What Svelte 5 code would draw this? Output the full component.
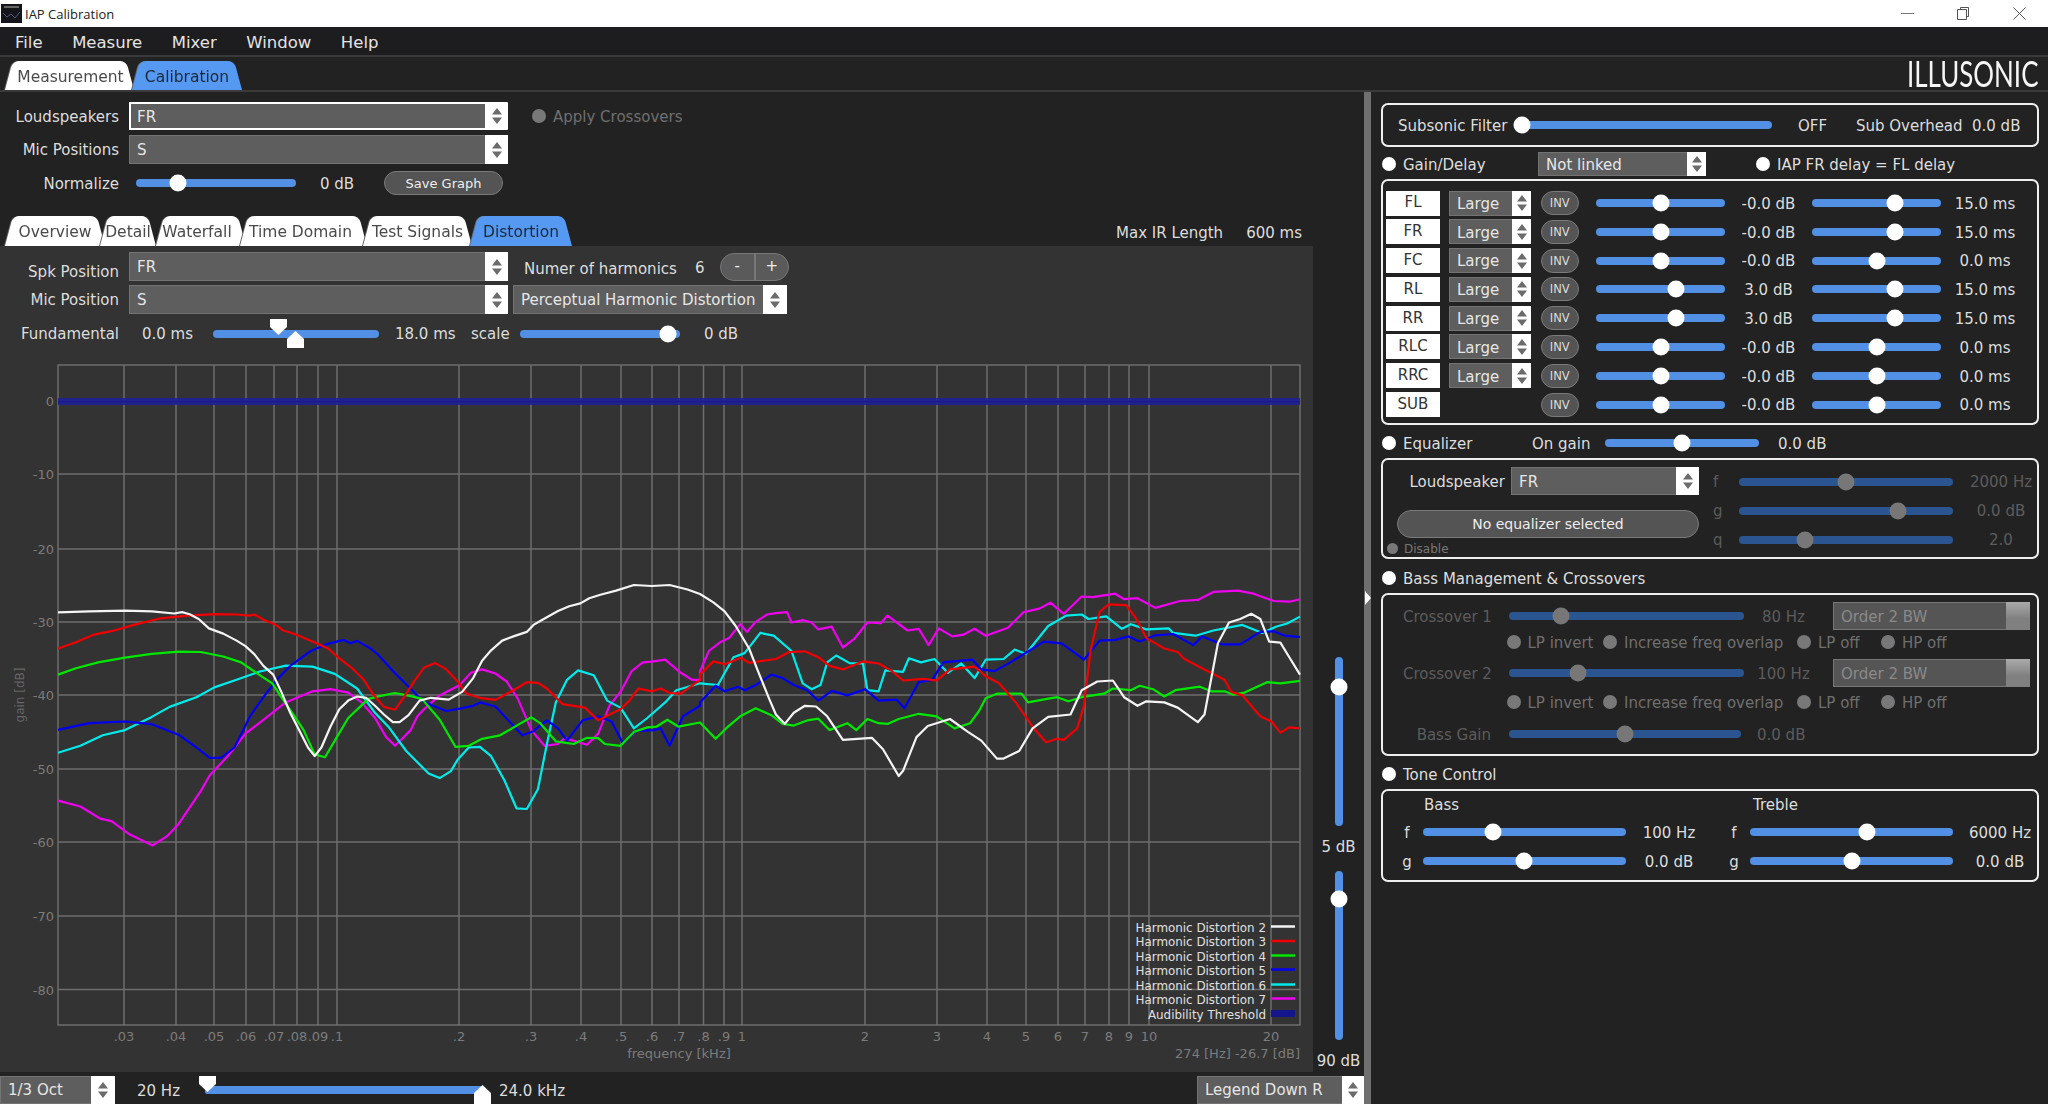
<script>
  const curves = {
    magenta: ['#f000f0', '130,693 180,710 225,745 250,752 290,790 342,822 375,795 400,760 450,665 470,620 510,565 550,500 600,450 640,410 700,378 740,372 780,382 810,410 840,455 865,510 885,535 920,490 935,450 950,430 985,390 1030,360 1055,325 1080,315 1110,327 1135,350 1160,400 1190,490 1220,535 1250,530 1265,513 1315,532 1340,500 1365,420 1390,380 1415,320 1440,295 1460,293 1490,287 1525,325 1550,345 1568,345',
      '0,320 20,262 45,237 65,225 90,185 105,207 125,178 150,157 170,153 195,150 205,180 230,173 250,180 265,200 295,192 320,252 345,228 375,180 405,182 420,160 465,203 490,198 512,245 535,197 565,220 590,215 615,198 640,218 690,195 725,150 760,140 785,123 815,155 855,105 880,107 930,97 950,113 980,110 1020,138 1075,118 1115,115 1150,92 1205,88 1240,97 1285,118 1320,120 1344,113'],
    cyan: ['#00ecec', '130,555 180,535 230,505 280,490 340,452 380,423 440,395 480,367 530,345 580,322 640,304 700,307 750,328 800,370 840,440 870,480 910,550 960,615 985,628 1010,608 1025,575 1050,540 1075,538 1100,565 1130,635 1157,715 1180,717 1205,660 1225,530 1245,410 1270,345 1295,318 1330,332 1360,405 1390,425 1420,485 1450,455 1490,410 1515,375 1568,355',
      '0,355 40,360 75,280 100,268 135,210 165,218 205,262 230,355 250,372 270,360 285,295 305,275 335,297 365,298 375,375 400,378 415,318 455,322 468,283 495,295 525,285 555,325 585,298 615,340 640,287 680,285 705,258 730,270 780,190 820,160 855,157 870,170 910,162 945,198 965,185 1000,200 1050,197 1060,210 1110,218 1150,203 1215,187 1260,210 1290,192 1315,183 1344,163'],
    blue: ['#0000f0', '130,489 200,470 280,465 340,473 400,503 440,540 470,570 495,570 525,540 545,490 560,450 590,395 620,345 650,305 695,263 730,243 770,230 785,240 800,233 830,255 845,270 880,320 910,358 945,405 970,420 1000,435 1030,428 1060,420 1075,410 1110,422 1130,450 1170,505 1195,493 1225,462 1250,485 1270,520 1305,462 1340,450 1370,465 1395,528 1425,492 1465,490 1480,485 1500,535 1530,450 1568,420',
      '0,410 35,362 55,378 85,365 100,375 125,360 160,330 185,340 210,360 240,375 265,405 295,377 330,390 370,372 400,405 440,402 458,427 490,352 520,345 545,295 610,287 630,315 660,320 695,295 770,235 810,240 860,287 895,232 930,230 960,220 985,235 1020,217 1060,213 1105,245 1125,220 1170,243 1210,243 1255,207 1285,205 1310,218 1344,222'],
    green: ['#00e800', '130,330 170,312 220,295 280,281 340,270 400,264 450,265 500,278 540,295 580,330 610,355 630,395 660,450 680,490 705,560 728,568 750,520 780,455 825,400 850,392 885,383 920,392 945,400 985,460 1020,538 1050,535 1080,515 1120,505 1160,475 1190,453 1210,470 1245,522 1285,530 1315,512 1340,513 1355,530 1390,535 1420,495 1450,482 1470,480 1495,460 1520,480 1568,468',
      '0,468 35,515 60,483 90,450 125,427 160,447 185,472 210,477 240,462 265,457 290,490 330,470 350,490 375,458 400,470 420,472 445,458 490,443 530,450 570,485 605,470 625,435 640,398 665,385 720,385 735,410 765,403 800,395 825,407 855,395 905,385 925,370 965,375 985,362 1015,372 1040,393 1065,375 1120,365 1145,378 1175,378 1195,388 1220,382 1270,352 1300,355 1344,348'],
    red: ['#f00000', '130,255 170,237 210,215 250,205 300,187 360,168 420,160 480,156 530,157 560,160 570,157 590,172 615,185 635,203 660,213 700,235 735,255 760,283 790,313 815,345 835,385 860,423 885,431 905,395 930,345 950,310 975,297 1000,315 1025,350 1045,385 1075,397 1110,403 1150,375 1180,352 1205,354 1225,370 1260,415 1285,420 1310,425 1340,462 1365,445 1390,430 1410,405 1430,370 1460,378 1480,370 1500,383 1525,385 1568,345',
      '0,330 30,292 55,300 90,282 110,296 170,285 200,265 235,263 265,280 290,305 320,315 365,292 400,298 430,320 455,347 500,342 530,347 560,315 615,307 640,335 670,355 710,415 745,480 775,525 800,515 815,518 845,485 860,420 875,260 895,150 915,128 955,130 975,165 1000,225 1040,255 1070,265 1085,285 1130,315 1175,345 1190,380 1215,390 1255,450 1280,465 1300,497 1320,482 1344,485'],
    white: ['#f4f4f4', '130,151 200,148 280,146 340,148 390,154 408,150 425,156 445,170 468,197 500,212 530,232 550,248 570,272 590,305 612,330 630,380 650,440 670,490 690,540 705,565 720,540 740,480 760,430 780,405 800,393 820,397 840,420 860,445 880,467 895,467 915,447 940,405 965,397 1005,402 1035,380 1060,340 1080,290 1100,260 1125,232 1150,220 1180,207 1195,187 1215,172 1250,147 1275,133 1300,125 1320,110 1345,100 1380,88 1420,72 1460,75 1500,72 1540,85 1568,98',
      '0,98 30,122 55,148 80,190 110,255 130,320 155,400 170,445 190,472 210,440 235,420 260,422 285,450 320,518 385,512 410,545 445,622 455,607 485,510 510,478 560,458 600,495 630,520 665,572 680,572 715,550 745,485 780,452 830,445 855,375 890,350 925,347 950,395 980,420 1000,407 1040,410 1070,425 1115,467 1130,445 1160,240 1185,180 1210,170 1235,155 1255,170 1275,235 1300,238 1320,280 1344,330']
  };
  const toPoints = (a, b) => {
    const conv = (s, ox) => s.split(' ').map((p) => {
      const [u, v] = p.split(',').map(Number);
      return `${(ox + u / 2.24).toFixed(1)},${(560 + v / 2.88).toFixed(1)}`;
    }).join(' ');
    return conv(a, 0) + ' ' + conv(b, 700);
  };
  const lines = Object.values(curves).map(([c, a, b]) => ({ c, pts: toPoints(a, b) }));
  const gridV = [[124,'.03'],[176,'.04'],[214,'.05'],[246,'.06'],[274,'.07'],[297,'.08'],[318,'.09'],[337,'.1'],[459,'.2'],[531,'.3'],[581,'.4'],[621,'.5'],[652,'.6'],[679,'.7'],[703.5,'.8'],[724,'.9'],[742,'1'],[865,'2'],[937,'3'],[987,'4'],[1026,'5'],[1058,'6'],[1085,'7'],[1109,'8'],[1129,'9'],[1149,'10'],[1271,'20']];
  const gridH = [[401,'0'],[474,'-10'],[549,'-20'],[622,'-30'],[695,'-40'],[769,'-50'],[842,'-60'],[916,'-70'],[989.5,'-80']];
  const legend = [['Harmonic Distortion 2','#f4f4f4',927],['Harmonic Distortion 3','#f00000',941.5],['Harmonic Distortion 4','#00e800',956],['Harmonic Distortion 5','#0000f0',970],['Harmonic Distortion 6','#00ecec',985],['Harmonic Distortion 7','#f000f0',999]];
  const outerTabs = [['Measurement',129,0,false,1],['Calibration',110,-2,true,0]];
  const innerTabs = [['Overview',100,0,false,0],['Detail',56,-5,false,0],['Waterfall',90,0,false,-4],['Time Domain',127,-6,false,-3],['Test Signals',109,-4,false,0],['Distortion',102,-2,true,0]];
  const channels = [
    ['FL',true,64.5,'-0.0 dB',83,'15.0 ms'],['FR',true,64.5,'-0.0 dB',83,'15.0 ms'],['FC',true,64.5,'-0.0 dB',65,'0.0 ms'],
    ['RL',true,79.5,'3.0 dB',83,'15.0 ms'],['RR',true,79.5,'3.0 dB',83,'15.0 ms'],['RLC',true,64.5,'-0.0 dB',65,'0.0 ms'],
    ['RRC',true,64.5,'-0.0 dB',65,'0.0 ms'],['SUB',false,64.5,'-0.0 dB',65,'0.0 ms']
  ];
  const eqs = [['f',107,'2000 Hz'],['g',159,'0.0 dB'],['q',66,'2.0']];
  const radios = ['LP invert','Increase freq overlap','LP off','HP off'];
</script>

{#snippet slider(w, c, off = false)}
  <div class="slider" class:off style="width:{w}px">
    {#if c !== null}<span class="thumb" style="left:{c}px"></span>{/if}
  </div>
{/snippet}
{#snippet vslider(c)}
  <div class="vslider"><span class="thumb" style="top:{c}px"></span></div>
{/snippet}
{#snippet combo(text, w, ab = 23, extra = '')}
  <div class="combo {extra}" style="width:{w}px">
    <span class="ctext">{text}</span>
    <span class="arrows" style="width:{ab}px">
      {#if extra !== 'grayed'}
        <svg width="10" height="16" viewBox="0 0 10 16"><path d="M5 0 L10 6.5 H0 Z M5 16 L0 9.5 H10 Z" fill="#6b6b6b"/></svg>
      {/if}
    </span>
  </div>
{/snippet}
{#snippet radio(text, off = false)}
  <div class="radio" class:off><i></i><span>{text}</span></div>
{/snippet}
{#snippet tabs(list)}
  {#each list as [t, w, m, active, s]}
    <div class="tab" class:active style="width:{w}px;margin-left:{m}px"><span style="left:{s}px">{t}</span></div>
  {/each}
{/snippet}

<div class="app">
  <header class="titlebar">
    <svg class="appicon" width="21" height="19" viewBox="0 0 21 19">
      <rect width="21" height="19" fill="#14151a"/>
      <rect x="3" y="2" width="15" height="2" fill="#666"/>
      <path d="M2 9 L6 13 L10 10 L14 14 L19 8" stroke="#557" fill="none"/>
    </svg>
    <span class="wintitle">IAP Calibration</span>
    <div class="winctl">
      <svg width="13" height="13" viewBox="0 0 13 13"><path d="M0 6.5H13" stroke="#777"/></svg>
      <svg width="13" height="13" viewBox="0 0 13 13"><path d="M3.5 2.5V.5H11.5V9.5H9.5M.5 2.5H9.5V12.5H.5Z" fill="none" stroke="#555"/></svg>
      <svg width="13" height="13" viewBox="0 0 13 13"><path d="M.5.5L12.5 12.5M12.5.5L.5 12.5" stroke="#555"/></svg>
    </div>
  </header>
  <nav class="menubar">
    <span>File</span><span>Measure</span><span>Mixer</span><span>Window</span><span>Help</span>
  </nav>
  <div class="topbar">
    <div class="tabs">{@render tabs(outerTabs)}</div>
    <div class="logo"><span>ILLUSONIC</span></div>
  </div>

  <div class="main">
    <section class="left">
      <div class="form">
        <div class="r1">
          <span class="rl">Loudspeakers</span>
          {@render combo('FR', 379, 23, 'focus')}
          {@render radio('Apply Crossovers', true)}
        </div>
        <div class="r2">
          <span class="rl">Mic Positions</span>
          {@render combo('S', 379)}
        </div>
        <div class="r3">
          <span class="rl">Normalize</span>
          {@render slider(160, 42)}
          <span>0 dB</span>
          <button class="pill save">Save Graph</button>
        </div>
      </div>
      <div class="subtabs">
        <div class="tabs">{@render tabs(innerTabs)}</div>
        <div class="maxir"><span>Max IR Length</span><span>600 ms</span></div>
      </div>
      <div class="content">
        <div class="panel">
          <div class="p1">
            <span class="rl low">Spk Position</span>
            {@render combo('FR', 379)}
            <span class="low2">Numer of harmonics</span>
            <span class="low3">6</span>
            <div class="stepper"><span>-</span><span>+</span></div>
          </div>
          <div class="p2">
            <span class="rl">Mic Position</span>
            {@render combo('S', 379)}
            {@render combo('Perceptual Harmonic Distortion', 274, 24)}
          </div>
          <div class="p3">
            <span class="rl rl23">Fundamental</span>
            <span>0.0 ms</span>
            <div class="dual">
              {@render slider(166, null)}
              <svg class="h-down" width="17" height="16" viewBox="0 0 17 16"><path d="M0 0H17V8L8.5 16L0 8Z" fill="#fff"/></svg>
              <svg class="h-up" width="17" height="17" viewBox="0 0 17 17"><path d="M8.5 0L17 8V17H0V8Z" fill="#fff"/></svg>
            </div>
            <span>18.0 ms</span>
            <span>scale</span>
            {@render slider(160, 148)}
            <span>0 dB</span>
          </div>
          <svg class="chart" width="1313" height="722" viewBox="0 350 1313 722">
            {#each gridH as [y, t]}
              <line x1="58" x2="1300" y1={y} y2={y} class="g"/>
              <text x="54" y={y + 5} text-anchor="end" class="ax">{t}</text>
            {/each}
            {#each gridV as [x, t]}
              <line x1={x} x2={x} y1="365" y2="1025" class="g"/>
              <text x={x} y="1041" text-anchor="middle" class="ax">{t}</text>
            {/each}
            <rect x="58" y="365" width="1242" height="660" fill="none" stroke="#6e6e6e" stroke-width="1.5"/>
            <rect x="58" y="398" width="1242" height="7" fill="#20209f" opacity=".85"/>
            <rect x="58" y="400.5" width="1242" height="2" fill="#1a1a8c"/>
            {#each lines as l}
              <polyline points={l.pts} fill="none" stroke={l.c} stroke-width="2.2" stroke-linejoin="round"/>
            {/each}
            <text x="679" y="1058" text-anchor="middle" class="ax">frequency [kHz]</text>
            <text x="1300" y="1058" text-anchor="end" class="ax">274 [Hz] -26.7 [dB]</text>
            <text transform="translate(24 695) rotate(-90)" text-anchor="middle" class="ax ax2">gain [dB]</text>
            {#each legend as [t, c, y]}
              <text x="1266" y={y + 4.5} text-anchor="end" class="lg">{t}</text>
              <line x1="1271" x2="1295" y1={y - 0.5} y2={y - 0.5} stroke={c} stroke-width="2.5"/>
            {/each}
            <text x="1266" y="1018.5" text-anchor="end" class="lg">Audibility Threshold</text>
            <rect x="1271" y="1010" width="24" height="7" fill="#14148c"/>
          </svg>
        </div>
        <div class="vs">
          {@render vslider(30)}
          <span>5 dB</span>
          {@render vslider(28)}
          <span>90 dB</span>
        </div>
      </div>
      <footer class="bottom">
        {@render combo('1/3 Oct', 115, 24)}
        <span class="bm">20 Hz</span>
        <div class="range">
          <div class="rtrack"></div>
          <svg class="rh-down" width="17" height="16" viewBox="0 0 17 16"><path d="M0 0H17V8L8.5 16L0 8Z" fill="#fff"/></svg>
          <svg class="rh-up" width="17" height="19" viewBox="0 0 17 19"><path d="M8.5 0L17 8V19H0V8Z" fill="#fff"/></svg>
        </div>
        <span class="bm">24.0 kHz</span>
        {@render combo('Legend Down R', 167, 22)}
      </footer>
    </section>

    <div class="splitter"><svg width="6" height="14" viewBox="0 0 6 14"><path d="M0 0L6 7L0 14Z" fill="#fff"/></svg></div>

    <aside class="right">
      <div class="box b1">
        <span>Subsonic Filter</span>
        {@render slider(256, 6)}
        <span>OFF</span>
        <span>Sub Overhead</span>
        <span>0.0 dB</span>
      </div>
      <div class="head gain">
        {@render radio('Gain/Delay')}
        {@render combo('Not linked', 168, 19)}
        {@render radio('IAP FR delay = FL delay')}
      </div>
      <div class="box b2">
        {#each channels as [name, hasCombo, g, gv, d, dv]}
          <div class="ch">
            <span class="chname">{name}</span>
            {#if hasCombo}{@render combo('Large', 82, 19, 'small')}{:else}<i></i>{/if}
            <button class="pill inv">INV</button>
            {@render slider(129, g)}
            <span class="cv1">{gv}</span>
            {@render slider(129.5, d)}
            <span class="cv2">{dv}</span>
          </div>
        {/each}
      </div>
      <div class="head eqh">
        {@render radio('Equalizer')}
        <span>On gain</span>
        {@render slider(154, 77)}
        <span>0.0 dB</span>
      </div>
      <div class="box b3">
        <div class="eql">
          <div class="eqsel"><span class="eqlab">Loudspeaker</span>{@render combo('FR', 188)}</div>
          <button class="pill noeq">No equalizer selected</button>
          <div class="dis"><i></i><span>Disable</span></div>
        </div>
        <div class="eqr">
          {#each eqs as [l, c, v]}
            <div class="eqrow dim">
              <span class="eql1">{l}</span>
              {@render slider(214, c, true)}
              <span class="eqv">{v}</span>
            </div>
          {/each}
        </div>
      </div>
      <div class="head bh">{@render radio('Bass Management & Crossovers')}</div>
      <div class="box b4">
        <div class="xo dim">
          <span class="xl">Crossover 1</span>
          {@render slider(234.5, 52, true)}
          <span class="xv">80 Hz</span>
          {@render combo('Order 2 BW', 197, 24, 'grayed')}
        </div>
        <div class="rr">{#each radios as t}{@render radio(t, true)}{/each}</div>
        <div class="xo x2 dim">
          <span class="xl">Crossover 2</span>
          {@render slider(234.5, 69, true)}
          <span class="xv">100 Hz</span>
          {@render combo('Order 2 BW', 197, 24, 'grayed')}
        </div>
        <div class="rr rr2">{#each radios as t}{@render radio(t, true)}{/each}</div>
        <div class="bg dim">
          <span class="xl xr">Bass Gain</span>
          {@render slider(232, 116, true)}
          <span>0.0 dB</span>
        </div>
      </div>
      <div class="head th">{@render radio('Tone Control')}</div>
      <div class="box b5">
        <div class="thd"><span>Bass</span><span>Treble</span></div>
        <div class="tr">
          <span class="t1">f</span>{@render slider(203, 70)}<span class="tv">100 Hz</span>
          <span class="t2">f</span>{@render slider(203, 117)}<span class="tv2">6000 Hz</span>
        </div>
        <div class="tr">
          <span class="t1">g</span>{@render slider(203, 101)}<span class="tv">0.0 dB</span>
          <span class="t2">g</span>{@render slider(203, 102)}<span class="tv2">0.0 dB</span>
        </div>
      </div>
    </aside>
  </div>
</div>

<style>
  :global(body) { margin: 0; background: #222; }
  .app { width: 2048px; height: 1104px; overflow: hidden; background: #222; color: #ddd; font: 15px/1.15 "DejaVu Sans", sans-serif; display: flex; flex-direction: column; }
  span { position: relative; top: 1.5px; }
  .titlebar { height: 27px; background: #fff; display: flex; align-items: center; flex: none; }
  .appicon { margin: 0 3px 0 1px; }
  .wintitle { font: 13px "Open Sans", sans-serif; color: #222; top: 0; }
  .winctl { margin-left: auto; display: flex; gap: 43px; padding-right: 22px; }
  .menubar { background: #1d1d20; border-bottom: 2px solid #3a3a3a; display: flex; align-items: center; gap: 29.5px; padding: 1px 0 0 15px; box-sizing: content-box; height: 27px; font-size: 16.5px; color: #e4e4e4; flex: none; }
  .topbar { box-sizing: content-box; height: 29px; border-bottom: 2px solid #3a3a3a; padding: 4px 10px 0 5px; display: flex; justify-content: space-between; flex: none; }
  .tabs { display: flex; height: 29px; }
  .tab { position: relative; z-index: 0; flex: none; height: 29px; display: flex; align-items: center; justify-content: center; color: #4a4a4a; filter: drop-shadow(-1px 0 0 #666); white-space: nowrap; font-size: 15.5px; }
  .tab span { position: relative; z-index: 1; top: 2px; }
  .tab::before, .tab::after { content: ""; position: absolute; top: 0; bottom: 0; background: #fff; border-radius: 6px 6px 0 0; z-index: 0; }
  .tab::before { left: 0; right: 30%; transform-origin: bottom left; transform: skewX(-15deg); }
  .tab::after { right: 0; left: 30%; transform-origin: bottom right; transform: skewX(15deg); }
  .tab.active { color: #1b2838; }
  .tab.active::before, .tab.active::after { background: #5599f2; }
  .logo { width: 131px; height: 29px; color: #f6f6f6; font: 400 36px/24px "Lato", sans-serif; }
  .logo span { display: block; top: 0; transform: scaleX(.72); transform-origin: left center; white-space: nowrap; }

  .main { flex: 1; display: flex; min-height: 0; }
  .left { width: 1364px; flex: none; display: flex; flex-direction: column; }
  .splitter { width: 7px; flex: none; background: #6f6f6f; position: relative; }
  .splitter svg { position: absolute; top: 499px; left: 1px; }
  .right { flex: 1; padding: 11px 0 0 10px; width: 658px; }

  .form { padding-top: 10px; }
  .rl { text-align: right; padding-right: 10px; box-sizing: border-box; white-space: nowrap; }
  .r1, .r2, .r3, .p1, .p2, .p3 { display: grid; align-items: center; }
  .r1 { height: 28px; grid-template-columns: 129px 403px auto; justify-content: start; }
  .r2 { height: 29px; margin-top: 5px; grid-template-columns: 129px 379px; }
  .r3 { height: 24px; margin-top: 7px; grid-template-columns: 136px 184px 64px 119px; }
  .r3 .rl { padding-right: 17px; }
  .subtabs { display: flex; height: 30px; margin-top: 21px; padding-left: 5px; position: relative; }
  .subtabs .tabs { height: 30px; }
  .subtabs .tab { height: 30px; }
  .maxir { position: absolute; left: 1116px; top: 7px; display: flex; gap: 23px; white-space: nowrap; }

  .content { display: flex; height: 826px; flex: none; }
  .panel { width: 1313px; flex: none; background: #333; padding-top: 6px; box-sizing: border-box; display: flex; flex-direction: column; }
  .p1 { height: 29px; grid-template-columns: 129px 395px 171px 25px 69px; white-space: nowrap; }
  .low { top: 6.5px; }
  .low2 { top: 3px; }
  .low3 { top: 2px; }
  .p2 { height: 29px; margin-top: 4px; grid-template-columns: 129px 384px 274px; }
  .p3 { height: 29px; margin-top: 5px; grid-template-columns: 142px 71px 182px 76px 49px 184px auto; white-space: nowrap; }
  .rl23 { padding-right: 23px; }
  .stepper { height: 28px; width: 69px; border: 1px solid #777; border-radius: 14px; background: #5a5a5a; box-sizing: border-box; display: flex; color: #eee; overflow: hidden; }
  .stepper span { flex: 1; display: flex; align-items: center; justify-content: center; top: 0; }
  .stepper span:first-child { border-right: 2px solid #777; }
  .dual { position: relative; height: 29px; display: flex; align-items: center; width: 166px; }
  .h-down { position: absolute; left: 56.5px; top: 0; }
  .h-up { position: absolute; left: 73.5px; top: 12px; }
  .chart { display: block; margin-top: 2px; }
  .g { stroke: #6e6e6e; stroke-width: 1.5; }
  .ax { fill: #7c7c7c; font: 13px "DejaVu Sans", sans-serif; }
  .ax2 { font-size: 12px; fill: #666; }
  .lg { fill: #e0e0e0; font: 11.9px "DejaVu Sans", sans-serif; }

  .vs { width: 51px; flex: none; display: flex; flex-direction: column; align-items: center; padding-top: 411px; box-sizing: border-box; white-space: nowrap; }
  .vs > span { height: 22px; line-height: 22px; margin-top: 8px; margin-bottom: 15px; }
  .vslider { width: 8px; height: 169px; background: #5190e5; border-radius: 4px; position: relative; flex: none; }
  .vslider .thumb { left: 4px; }

  .bottom { height: 32px; display: grid; grid-template-columns: 137px 68px 294px 698px 167px; align-items: end; flex: none; white-space: nowrap; }
  .bottom :global(.combo) { height: 28px; }
  .bottom span { top: 0.5px; }
  .bm { height: 28px; line-height: 28px; }
  .range { position: relative; height: 28px; width: 279px; }
  .rtrack { position: absolute; left: 0; right: 0; top: 10px; height: 8px; background: #5190e5; border-radius: 2px; }
  .rh-down { position: absolute; left: -6px; top: 0; }
  .rh-up { position: absolute; left: 269px; top: 9px; }

  .slider { height: 8px; background: #5190e5; border-radius: 4px; position: relative; }
  .slider.off { background: #2a5590; }
  .thumb { position: absolute; width: 17px; height: 17px; border-radius: 50%; background: #fff; transform: translate(-50%, -50%); top: 50%; }
  .slider .thumb { top: 50%; }
  .slider.off .thumb { background: #777; }

  .combo { height: 100%; box-sizing: border-box; border: 1px solid #737373; background: #5e5e5e; display: flex; align-items: center; padding-left: 7px; color: #e6e6e6; white-space: nowrap; min-height: 0; }
  .combo.focus { border: 2px solid #fff; border-right-width: 0; border-radius: 1px; padding-left: 6px; }
  .ctext { flex: 1; min-width: 0; }
  .combo .arrows { top: 0; flex: none; align-self: stretch; background: #fff; display: flex; align-items: center; justify-content: center; margin: -1px -1px -1px 0; }
  .combo.focus .arrows { margin: 0; }
  .combo.grayed { background: #555; border-color: #777; color: #8a8a8a; }
  .combo.grayed .arrows { background: linear-gradient(#aaa, #808080 60%); }
  .pill { border: 1px solid #7a7a7a; background: #545454; color: #eee; font: 13px "DejaVu Sans", sans-serif; border-radius: 14px; padding: 0; box-sizing: border-box; }
  .save { height: 24px; width: 119px; }

  .radio { display: flex; align-items: center; gap: 7px; white-space: nowrap; color: #dedede; }
  .radio i { width: 14px; height: 14px; border-radius: 50%; background: #fff; flex: none; }
  .radio.off { color: #6f6f6f; }
  .radio.off i { background: #787878; }

  .box { border: 2px solid #eee; border-radius: 7px; width: 658px; box-sizing: border-box; }
  .b1 { height: 44px; display: grid; grid-template-columns: 118px 282px 58px 116px auto; padding-left: 15px; align-items: center; white-space: nowrap; }
  .head { height: 24px; display: grid; align-items: center; margin-left: 1px; white-space: nowrap; }
  .gain { margin-top: 5px; grid-template-columns: 156px 218px auto; }
  .b2 { margin-top: 3px; height: 246px; padding: 9.5px 0 0 3px; display: flex; flex-direction: column; gap: 3.8px; }
  .ch { height: 25px; display: grid; grid-template-columns: 63px 92px 55px 145px 70.5px 129.5px 88px; align-items: center; white-space: nowrap; }
  .chname { top: 0; width: 54px; height: 25px; background: #fff; color: #333; display: flex; align-items: center; justify-content: center; }
  .ch :global(.combo) { height: 25px; }
  .inv { width: 37.5px; height: 24px; font-size: 11.5px; color: #ddd; }
  .cv1 { text-align: center; padding-right: 15.5px; box-sizing: border-box; }
  .cv2 { text-align: center; }

  .eqh { margin-top: 6px; grid-template-columns: 150px 73px 173px auto; }
  .b3 { margin-top: 3px; height: 101px; display: flex; padding-top: 7px; }
  .eql { width: 330px; flex: none; }
  .eqsel { height: 28px; display: grid; grid-template-columns: 128px 188px; align-items: center; }
  .eqlab { text-align: right; padding-right: 6px; }
  .noeq { display: block; height: 28px; width: 302px; margin: 15px 0 0 14px; font-size: 14px; border-radius: 14px; }
  .dis { height: 12px; margin: 4px 0 0 4px; display: flex; align-items: center; gap: 6px; font-size: 12px; color: #777; }
  .dis i { width: 11px; height: 11px; border-radius: 50%; background: #787878; }
  .eqrow { height: 29px; display: grid; grid-template-columns: 26px 214px 84px; align-items: center; }
  .dim { color: #5c5c5c; }
  .eqv { text-align: center; padding-left: 12px; white-space: nowrap; }

  .bh { margin-top: 7px; }
  .b4 { margin-top: 3px; height: 163px; padding-top: 7px; }
  .xo { height: 28px; display: grid; grid-template-columns: 126px 234.5px 89.5px 197px; align-items: center; white-space: nowrap; }
  .xo :global(.combo) { height: 28px; }
  .x2 { margin-top: 5px; }
  .xl { padding-left: 20px; }
  .xr { padding-left: 0; text-align: right; padding-right: 18px; }
  .xv { text-align: center; padding-right: 9.5px; }
  .rr { height: 24px; display: grid; grid-template-columns: 96.5px 194px 84px auto; margin-left: 123.5px; align-items: center; }
  .rr2 { margin-top: 3px; }
  .bg { margin-top: 6px; height: 28px; display: grid; grid-template-columns: 126px 232px auto; align-items: center; }
  .bg > span:last-child { padding-left: 16px; white-space: nowrap; }

  .th { margin-top: 6px; }
  .b5 { margin-top: 3px; height: 93px; padding: 1px 0 0 0; }
  .thd { height: 24px; display: grid; grid-template-columns: 329px auto; padding-left: 41px; align-items: center; }
  .tr { height: 29px; display: grid; grid-template-columns: 40px 203px 86px 38px 203px 84px; align-items: center; white-space: nowrap; }
  .thd + .tr { margin-top: 1.5px; }
  .t1 { text-align: center; padding-left: 8px; }
  .t2 { text-align: center; padding-left: 6px; }
  .tv { text-align: center; }
  .tv2 { text-align: center; padding-left: 10px; }
</style>
